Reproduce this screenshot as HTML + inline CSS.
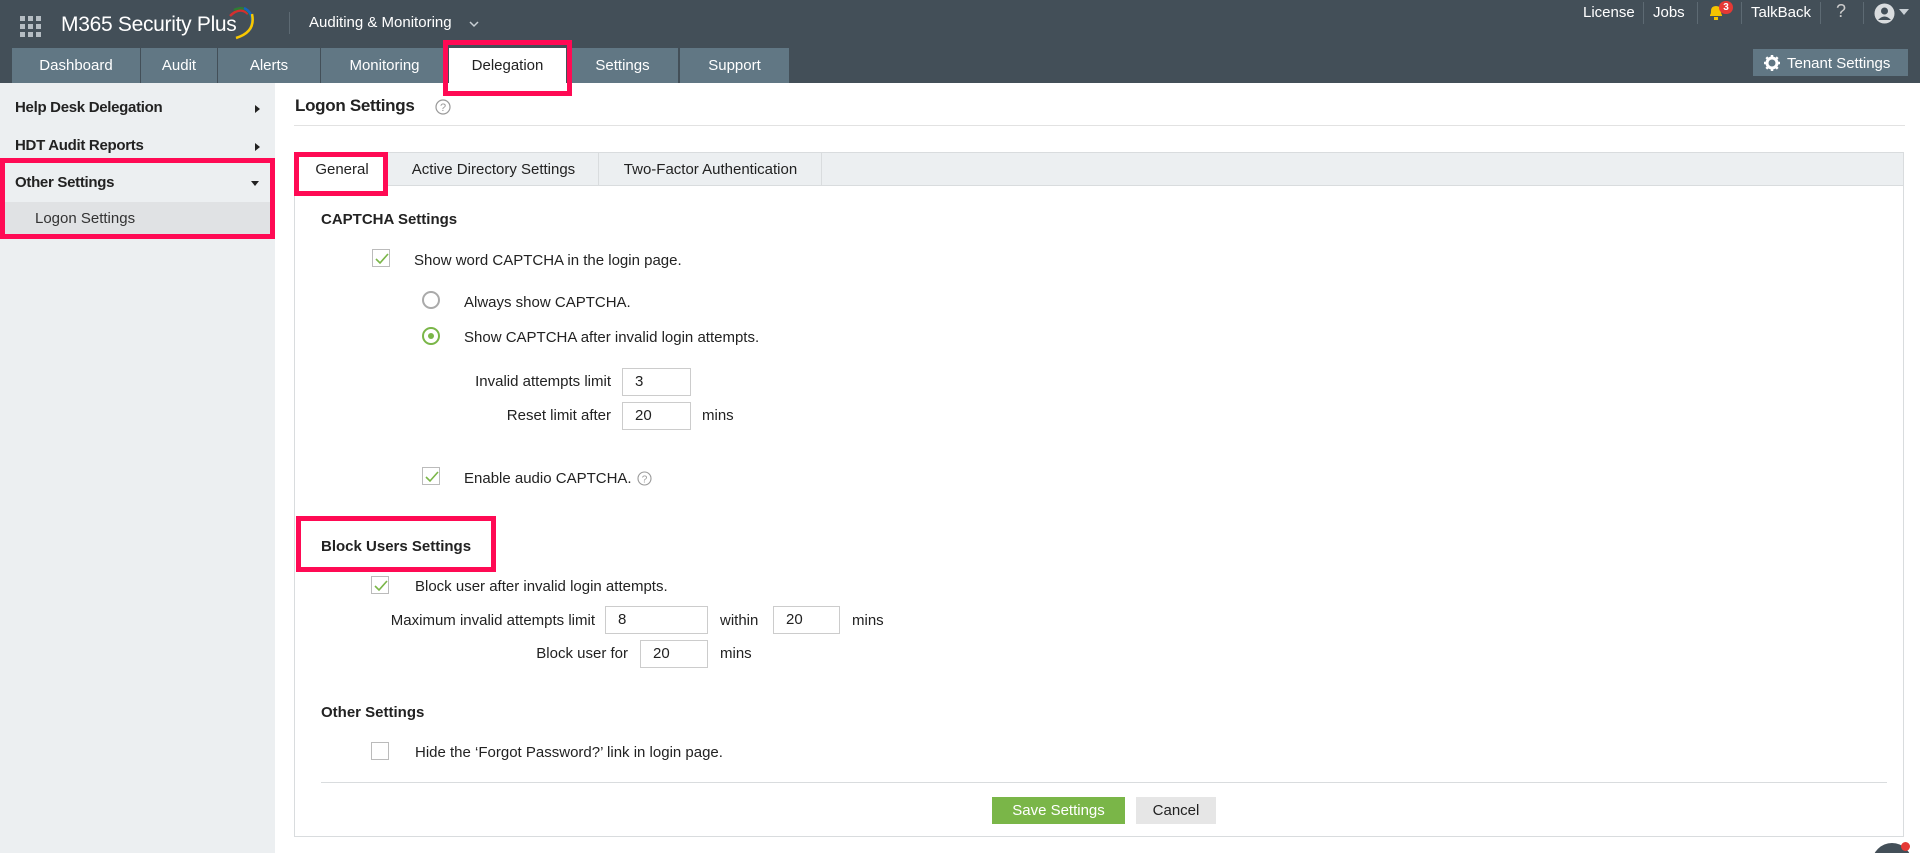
<!DOCTYPE html>
<html><head><meta charset="utf-8"><style>
*{margin:0;padding:0;box-sizing:border-box}
html,body{width:1920px;height:853px;overflow:hidden}
body{background:#fff;font-family:"Liberation Sans",sans-serif;font-size:15px;color:#222;position:relative}
.a{position:absolute;white-space:nowrap}
.hdr{left:0;top:0;width:1920px;height:83px;background:#434f58}
.tab{top:48px;height:35px;background:#617784;color:#fff;font-size:15px;text-align:center;line-height:35px}
.red{position:absolute;border:5px solid #ff0a54}
.cb{position:absolute;width:18px;height:18px;border:1px solid #bbb;background:#fff}
.cb svg{position:absolute;left:1px;top:1px}
.inp{position:absolute;border:1px solid #ccc;height:28px;padding-left:12px;line-height:26px;background:#fff}
.t{line-height:20px}
.r{text-align:right}
</style></head><body>
<div class="a hdr"></div>
<svg class="a" style="left:20px;top:16px" width="21" height="21" viewBox="0 0 21 21" fill="#b5bdc3">
<rect x="0" y="0" width="5" height="5"/><rect x="8" y="0" width="5" height="5"/><rect x="16" y="0" width="5" height="5"/>
<rect x="0" y="8" width="5" height="5"/><rect x="8" y="8" width="5" height="5"/><rect x="16" y="8" width="5" height="5"/>
<rect x="0" y="16" width="5" height="5"/><rect x="8" y="16" width="5" height="5"/><rect x="16" y="16" width="5" height="5"/></svg>
<div class="a" style="left:61px;top:12px;color:#fff;font-size:21px;line-height:26px;letter-spacing:-0.3px">M365 Security Plus</div>
<svg class="a" style="left:222px;top:4px" width="36" height="36" viewBox="0 0 36 36" fill="none" stroke-width="2.5">
<path d="M8 12 Q18 2 26 10" stroke="#d32f2f"/><path d="M12 6 Q24 0 30 14" stroke="#2e7d32"/><path d="M22 4 Q34 10 28 26" stroke="#1565c0"/><path d="M30 10 Q34 28 14 34" stroke="#f9c800"/></svg>
<div class="a" style="left:289px;top:12px;width:1px;height:22px;background:#5d6a73"></div>
<div class="a" style="left:309px;top:14px;color:#fff;font-size:15px">Auditing &amp; Monitoring</div>
<svg class="a" style="left:469px;top:21px" width="10" height="7" viewBox="0 0 10 7"><path d="M1 1 L5 5 L9 1" stroke="#c9d0d5" stroke-width="1.5" fill="none"/></svg>
<div class="a" style="left:1583px;top:4px;color:#fff;font-size:15px">License</div>
<div class="a" style="left:1643px;top:2px;width:1px;height:22px;background:#5d6a73"></div>
<div class="a" style="left:1653px;top:4px;color:#fff;font-size:15px">Jobs</div>
<div class="a" style="left:1697px;top:2px;width:1px;height:22px;background:#5d6a73"></div>
<svg class="a" style="left:1707px;top:3px" width="18" height="18" viewBox="0 0 18 18"><path d="M3 13 L3 12 Q4 11 4 8 Q4 3 9 3 Q14 3 14 8 Q14 11 15 12 L15 13 Z" fill="#f4c400"/><rect x="7" y="14" width="4" height="3" fill="#f4c400"/></svg>
<div class="a" style="left:1719px;top:1px;width:14px;height:13px;border-radius:7px;background:#e53935;color:#fff;font-size:10px;font-weight:bold;text-align:center;line-height:13px">3</div>
<div class="a" style="left:1741px;top:2px;width:1px;height:22px;background:#5d6a73"></div>
<div class="a" style="left:1751px;top:4px;color:#fff;font-size:15px">TalkBack</div>
<div class="a" style="left:1820px;top:2px;width:1px;height:22px;background:#5d6a73"></div>
<div class="a" style="left:1836px;top:1px;color:#ccc;font-size:18px">?</div>
<div class="a" style="left:1863px;top:2px;width:1px;height:22px;background:#5d6a73"></div>
<svg class="a" style="left:1874px;top:3px" width="21" height="21" viewBox="0 0 21 21"><circle cx="10.5" cy="10.5" r="10" fill="#d9dcde"/><circle cx="10.5" cy="8" r="3.5" fill="#434f58"/><path d="M4 17 Q10.5 10 17 17" fill="#434f58"/></svg>
<svg class="a" style="left:1899px;top:9px" width="10" height="6"><path d="M0 0 L10 0 L5 6Z" fill="#c9d0d5"/></svg>
<div class="a" style="left:1753px;top:49px;width:155px;height:27px;background:#617784"></div>
<svg class="a" style="left:1764px;top:55px" width="16" height="16" viewBox="0 0 16 16"><circle cx="8" cy="8" r="5" fill="none" stroke="#fff" stroke-width="3"/><g stroke="#fff" stroke-width="2.5"><path d="M8 0v4M8 12v4M0 8h4M12 8h4M2.3 2.3l2.8 2.8M10.9 10.9l2.8 2.8M2.3 13.7l2.8-2.8M10.9 5.1l2.8-2.8"/></g></svg>
<div class="a" style="left:1787px;top:55px;color:#fff;font-size:15px">Tenant Settings</div>

<div class="a tab" style="left:12px;width:128px">Dashboard</div>
<div class="a tab" style="left:141px;width:76px">Audit</div>
<div class="a tab" style="left:218px;width:102px">Alerts</div>
<div class="a tab" style="left:321px;width:127px">Monitoring</div>
<div class="a tab" style="left:449px;width:117px;background:#fff;color:#222">Delegation</div>
<div class="a tab" style="left:567px;width:111px">Settings</div>
<div class="a tab" style="left:680px;width:109px">Support</div>
<div class="red" style="left:443px;top:40px;width:129px;height:56px"></div>

<div class="a" style="left:0;top:83px;width:275px;height:770px;background:#eceff1"></div>
<div class="a" style="left:15px;top:99px;font-size:15px;font-weight:bold;letter-spacing:-0.3px">Help Desk Delegation</div>
<svg class="a" style="left:255px;top:105px" width="5" height="8"><path d="M0 0L5 4L0 8Z" fill="#222"/></svg>
<div class="a" style="left:15px;top:137px;font-size:15px;font-weight:bold;letter-spacing:-0.3px">HDT Audit Reports</div>
<svg class="a" style="left:255px;top:143px" width="5" height="8"><path d="M0 0L5 4L0 8Z" fill="#222"/></svg>
<div class="a" style="left:15px;top:174px;font-size:15px;font-weight:bold;letter-spacing:-0.3px">Other Settings</div>
<svg class="a" style="left:251px;top:181px" width="8" height="5"><path d="M0 0L8 0L4 5Z" fill="#222"/></svg>
<div class="a" style="left:0;top:202px;width:275px;height:32px;background:#e0e2e4"></div>
<div class="a" style="left:35px;top:210px;font-size:15px;color:#333">Logon Settings</div>
<div class="red" style="left:0;top:158px;width:275px;height:81px"></div>

<div class="a" style="left:295px;top:96px;font-size:17px;font-weight:bold;letter-spacing:-0.3px">Logon Settings</div>
<svg class="a" style="left:435px;top:99px" width="16" height="16"><circle cx="8" cy="8" r="7" fill="none" stroke="#999" stroke-width="1.2"/><text x="8" y="12" font-size="11" text-anchor="middle" fill="#999" font-family="Liberation Sans">?</text></svg>
<div class="a" style="left:294px;top:125px;width:1611px;height:1px;background:#e2e2e2"></div>

<div class="a" style="left:294px;top:152px;width:1610px;height:685px;border:1px solid #d9dcde"></div>
<div class="a" style="left:295px;top:153px;width:1608px;height:33px;background:#eceff1;border-bottom:1px solid #d9dcde"></div>
<div class="a" style="left:299px;top:153px;width:86px;height:34px;background:#fff;text-align:center;line-height:34px">General</div>
<div class="a" style="left:389px;top:153px;width:210px;height:33px;text-align:center;line-height:34px;border-right:1px solid #d9dcde">Active Directory Settings</div>
<div class="a" style="left:600px;top:153px;width:222px;height:33px;text-align:center;line-height:34px;border-right:1px solid #d9dcde">Two-Factor Authentication</div>
<div class="red" style="left:294px;top:152px;width:94px;height:44px"></div>

<svg width="0" height="0" style="position:absolute"><defs><path id="ck" d="M2 8 L6 12 L14 3" stroke="#7ab648" stroke-width="1.6" fill="none"/></defs></svg>

<div class="a t" style="left:321px;top:210px;font-weight:bold">CAPTCHA Settings</div>
<div class="cb" style="left:372px;top:249px"><svg width="16" height="16"><use href="#ck"/></svg></div>
<div class="a t" style="left:414px;top:251px">Show word CAPTCHA in the login page.</div>
<div class="a" style="left:422px;top:291px;width:18px;height:18px;border:2px solid #aaa;border-radius:50%"></div>
<div class="a t" style="left:464px;top:293px">Always show CAPTCHA.</div>
<div class="a" style="left:422px;top:327px;width:18px;height:18px;border:2px solid #7ab648;border-radius:50%"></div>
<div class="a" style="left:428px;top:333px;width:6px;height:6px;background:#7ab648;border-radius:50%"></div>
<div class="a t" style="left:464px;top:328px">Show CAPTCHA after invalid login attempts.</div>
<div class="a t r" style="left:311px;top:372px;width:300px">Invalid attempts limit</div>
<div class="inp" style="left:622px;top:368px;width:69px">3</div>
<div class="a t r" style="left:311px;top:406px;width:300px">Reset limit after</div>
<div class="inp" style="left:622px;top:402px;width:69px">20</div>
<div class="a t" style="left:702px;top:406px">mins</div>
<div class="cb" style="left:422px;top:467px"><svg width="16" height="16"><use href="#ck"/></svg></div>
<div class="a t" style="left:464px;top:469px">Enable audio CAPTCHA.</div>
<svg class="a" style="left:637px;top:471px" width="15" height="15"><circle cx="7.5" cy="7.5" r="6.5" fill="none" stroke="#999" stroke-width="1.1"/><text x="7.5" y="11.5" font-size="10" text-anchor="middle" fill="#999" font-family="Liberation Sans">?</text></svg>

<div class="a t" style="left:321px;top:537px;font-weight:bold">Block Users Settings</div>
<div class="red" style="left:296px;top:516px;width:200px;height:56px"></div>
<div class="cb" style="left:371px;top:576px"><svg width="16" height="16"><use href="#ck"/></svg></div>
<div class="a t" style="left:415px;top:577px">Block user after invalid login attempts.</div>
<div class="a t r" style="left:195px;top:611px;width:400px">Maximum invalid attempts limit</div>
<div class="inp" style="left:605px;top:606px;width:103px">8</div>
<div class="a t" style="left:720px;top:611px">within</div>
<div class="inp" style="left:773px;top:606px;width:67px">20</div>
<div class="a t" style="left:852px;top:611px">mins</div>
<div class="a t r" style="left:228px;top:644px;width:400px">Block user for</div>
<div class="inp" style="left:640px;top:640px;width:68px">20</div>
<div class="a t" style="left:720px;top:644px">mins</div>

<div class="a t" style="left:321px;top:703px;font-weight:bold">Other Settings</div>
<div class="cb" style="left:371px;top:742px"></div>
<div class="a t" style="left:415px;top:743px">Hide the ‘Forgot Password?’ link in login page.</div>
<div class="a" style="left:321px;top:782px;width:1566px;height:1px;background:#d9dcde"></div>
<div class="a" style="left:992px;top:797px;width:133px;height:27px;background:#7ab648;color:#fff;text-align:center;line-height:27px">Save Settings</div>
<div class="a" style="left:1136px;top:797px;width:80px;height:27px;background:#e6e6e6;color:#222;text-align:center;line-height:27px">Cancel</div>
<div class="a" style="left:1872px;top:843px;width:40px;height:40px;border-radius:50%;background:#434f58"></div>
<div class="a" style="left:1901px;top:842px;width:9px;height:9px;border-radius:50%;background:#e53935"></div>
</body></html>
